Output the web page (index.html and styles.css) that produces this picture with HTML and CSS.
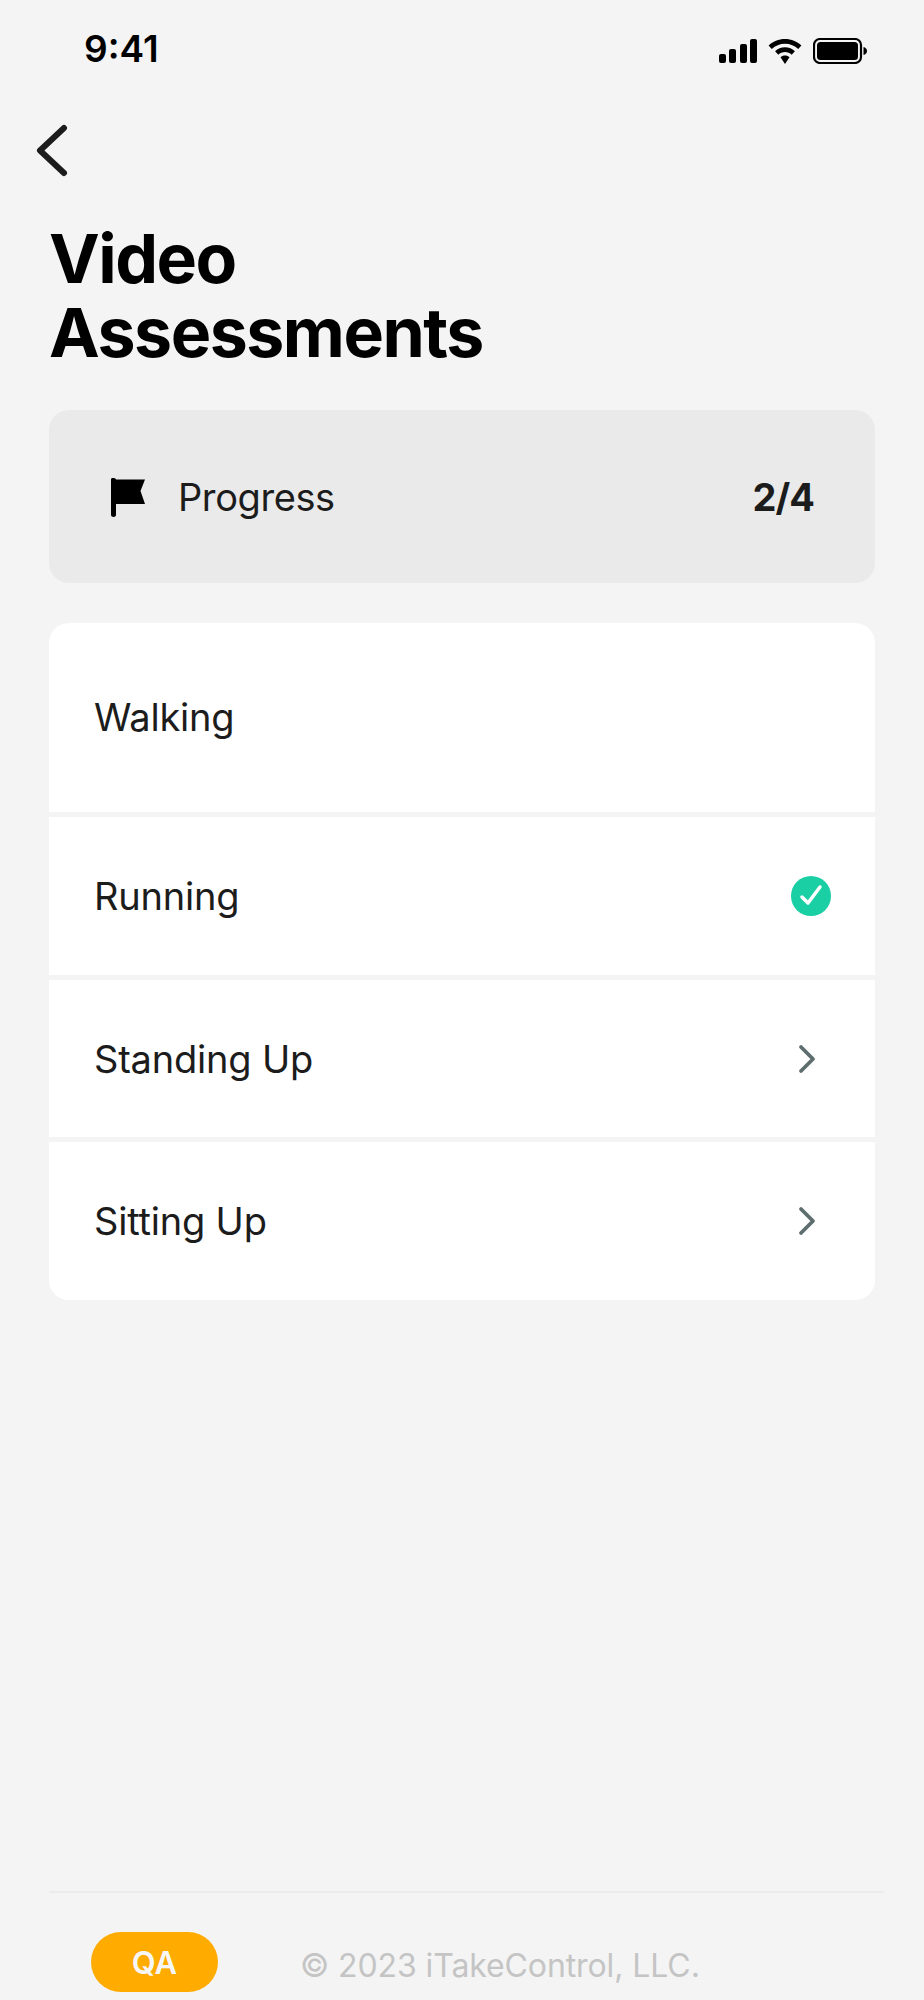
FILE: index.html
```html
<!DOCTYPE html>
<html lang="en">
<head>
    <meta charset="UTF-8">
    <meta name="viewport" content="width=device-width, initial-scale=1.0">
    <title>Video Assessments</title>
    <link rel="stylesheet" href="styles.css">
</head>
<body>
    <div class="screen">
        <div class="status-bar">
            <span class="time">9:41</span>
            <div class="status-icons">
                <svg width="38" height="24" viewBox="0 0 38 24">
                    <rect x="0" y="15" width="7" height="9" rx="2"/>
                    <rect x="10" y="10" width="7" height="14" rx="2"/>
                    <rect x="21" y="5" width="7" height="19" rx="2"/>
                    <rect x="31" y="0" width="7" height="24" rx="2"/>
                </svg>
                <svg width="34" height="25" viewBox="0 0 34 25">
                    <path d="M17 0C10.600 0 4.900 2.500 .6 6.500L3.800 10C7.200 6.800 11.900 4.800 17 4.800S26.800 6.800 30.200 10L33.400 6.500C29.100 2.500 23.400 0 17 0Z"/>
                    <path d="M17 8.300C13.200 8.300 9.700 9.800 7.100 12.200L10.300 15.700C12 14.100 14.400 13.100 17 13.100S22 14.100 23.700 15.700L26.900 12.200C24.300 9.800 20.800 8.300 17 8.300Z"/>
                    <path d="M17 16.500C15.300 16.500 13.700 17.200 12.500 18.200L17 25L21.500 18.200C20.300 17.200 18.700 16.500 17 16.500Z"/>
                </svg>
                <svg width="54" height="26" viewBox="0 0 54 26">
                    <rect x="1" y="1" width="47" height="24" rx="6" fill="none" stroke="#000" stroke-width="2.200"/>
                    <rect x="4" y="4" width="41" height="18" rx="3.500"/>
                    <path d="M50.500 9C52.500 9.500 54 11 54 13S52.500 16.500 50.500 17Z"/>
                </svg>
            </div>
        </div>

        <button class="back-button" aria-label="Back">
            <svg width="34" height="54" viewBox="0 0 34 54">
                <path d="M28 4L4 26.500L28 49" fill="none" stroke="#1c1c1c" stroke-width="6" stroke-linecap="round" stroke-linejoin="round"/>
            </svg>
        </button>

        <h1 class="page-title">Video<br>Assessments</h1>

        <div class="progress-card">
            <svg class="flag-icon" width="36" height="40" viewBox="0 0 36 40">
                <path d="M0 2C0 .5 5 .5 5 2.500H34L29.500 14L34 27H5V38C5 40.500 0 40.500 0 38Z"/>
            </svg>
            <span class="progress-label">Progress</span>
            <span class="progress-count">2/4</span>
        </div>

        <div class="task-list">
            <div class="task-row task-row-tall"><span>Walking</span></div>
            <div class="task-row">
                <span>Running</span>
                <svg class="check-icon" width="40" height="40" viewBox="0 0 40 40">
                    <circle cx="20" cy="20" r="20" fill="#19cfa3"/>
                    <path d="M11 21L17 27L29 11" fill="none" stroke="#fff" stroke-width="3.500" stroke-linecap="round" stroke-linejoin="round"/>
                </svg>
            </div>
            <div class="task-row">
                <span>Standing Up</span>
                <svg class="chevron-icon" width="18" height="30" viewBox="0 0 18 30">
                    <path d="M3 3L15 15L3 27" fill="none" stroke="#5e6e6e" stroke-width="3.800" stroke-linecap="round" stroke-linejoin="round"/>
                </svg>
            </div>
            <div class="task-row">
                <span>Sitting Up</span>
                <svg class="chevron-icon" width="18" height="30" viewBox="0 0 18 30">
                    <path d="M3 3L15 15L3 27" fill="none" stroke="#5e6e6e" stroke-width="3.800" stroke-linecap="round" stroke-linejoin="round"/>
                </svg>
            </div>
        </div>

        <div class="footer">
            <span class="env-badge">QA</span>
            <span class="copyright">© 2023 iTakeControl, LLC.</span>
        </div>
    </div>
</body>
</html>
```

FILE: styles.css
```css
* {
    box-sizing: border-box;
}
body {
    margin: 0;
    background-color: #f4f4f4;
    font-family: Inter, "Liberation Sans", sans-serif;
    color: #1c1c1c;
}
.screen {
    height: 2000px;
    display: flex;
    flex-direction: column;
    overflow: hidden;
}
.status-bar {
    height: 96px;
    padding: 28px 0 0 84px;
    display: flex;
    justify-content: space-between;
    align-items: flex-start;
}
.time {
    font-size: 37px;
    line-height: 42px;
    font-weight: 600;
    color: #000;
}
.status-icons {
    display: flex;
    align-items: center;
    gap: 11px;
    padding: 10px 57px 0 0;
}
.back-button {
    width: 34px;
    height: 54px;
    margin: 28px 0 0 36px;
    padding: 0;
    border: none;
    background: none;
}
.back-button svg {
    display: block;
}
.page-title {
    margin: 43px 0 0 49px;
    font-size: 68px;
    line-height: 74px;
    letter-spacing: -1.5px;
    font-weight: 700;
    color: #000;
}
.progress-card {
    width: 826px;
    height: 173px;
    margin: 41px 0 0 49px;
    padding: 0 61px 0 62px;
    display: flex;
    align-items: center;
    background-color: #eaeaea;
    border-radius: 20px;
}
.flag-icon {
    flex-shrink: 0;
}
.progress-label {
    margin-left: 31px;
    font-size: 38px;
    letter-spacing: -0.4px;
}
.progress-count {
    margin-left: auto;
    font-size: 38px;
    letter-spacing: -1px;
    font-weight: 700;
}
.task-list {
    width: 826px;
    height: 677px;
    margin: 40px 0 0 49px;
    display: flex;
    flex-direction: column;
    gap: 5px;
    border-radius: 20px;
    overflow: hidden;
}
.task-row {
    flex: 1;
    padding: 0 44px 0 45px;
    display: flex;
    align-items: center;
    justify-content: space-between;
    background-color: #fff;
    font-size: 38px;
    letter-spacing: -0.2px;
}
.task-row-tall {
    flex: 0 0 189px;
    padding-bottom: 2px;
}
.chevron-icon {
    margin-right: 15px;
}
.footer {
    height: 109px;
    margin: auto 40px 0 49px;
    padding: 39px 0 0 42px;
    display: flex;
    align-items: flex-start;
    border-top: 2px solid #ececec;
}
.env-badge {
    width: 127px;
    height: 60px;
    display: flex;
    align-items: center;
    justify-content: center;
    background-color: #ffab00;
    border-radius: 30px;
    color: #f6f6f6;
    font-size: 31px;
    font-weight: 600;
}
.copyright {
    margin: 14px 0 0 82px;
    font-size: 32px;
    line-height: 40px;
    letter-spacing: -0.1px;
    color: #c4c4c4;
}
```
